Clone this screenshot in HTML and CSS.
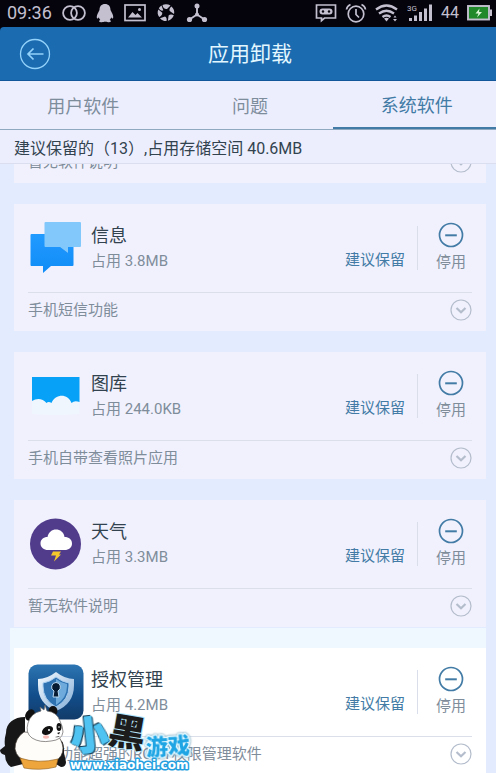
FILE: index.html
```html
<!DOCTYPE html>
<html lang="zh-CN">
<head>
<meta charset="utf-8">
<meta name="viewport" content="width=device-width, initial-scale=1">
<title>应用卸载</title>
<link rel="stylesheet" href="styles.css">
</head>
<body>
<svg class="defs" aria-hidden="true">
  <symbol id="minus" viewBox="0 0 26 26"><circle cx="13" cy="13" r="11.5" fill="none" stroke="currentColor" stroke-width="1.7"/><path d="M7.2 13.3h11.6" stroke="currentColor" stroke-width="2"/></symbol>
  <symbol id="chevron" viewBox="0 0 22 22"><circle cx="11" cy="11" r="10" fill="none" stroke="currentColor" stroke-width="1.2"/><path d="M6.5 9l4.5 4.2L15.5 9" fill="none" stroke="currentColor" stroke-width="2.2"/></symbol>
</svg>

<div class="status">
  <div class="status-group">
    <span class="clock">09:36</span>
    <svg width="24" height="18" viewBox="0 0 24 18" fill="none" stroke="currentColor" stroke-width="1.8"><circle cx="8" cy="9" r="6.9"/><circle cx="16" cy="9" r="6.9"/></svg>
    <svg width="18" height="20" viewBox="0 0 18 20" fill="currentColor"><path d="M9 1C5.500 1 3.500 3.300 3.500 7L1.500 11C.6 13.200.5 15.200 1.300 15.500c.5.100 1.100-.6 1.500-1.300.2 1 .8 2 1.500 2.700-1 .4-1.300 1-1.200 1.500.3 1.100 4.700 1 5.900.2 1.200.8 5.600.9 5.900-.2.1-.5-.2-1.100-1.200-1.500.7-.7 1.300-1.700 1.500-2.700.4.700 1 1.400 1.500 1.300.8-.3.700-2.300-.2-4.500L14.500 7C14.500 3.300 12.500 1 9 1z"/></svg>
    <svg width="22" height="18" viewBox="0 0 22 18"><rect x="1" y="1" width="20" height="15.500" fill="none" stroke="currentColor" stroke-width="1.7"/><path d="M4 13.500l4.500-5.500 3 3 2-2 4.500 4.500z" fill="currentColor"/><circle cx="15.500" cy="5.500" r="1.500" fill="currentColor"/></svg>
    <svg width="20" height="20" viewBox="0 0 20 20" fill="currentColor"><path d="M6.500 2C9 .8 12 1 14.500 2.500L11 6C9 6.500 6.800 4.800 6.500 2zM15.500 3.400c2.300 2 3.300 5 2.500 7.700l-4.300-3C13 6.500 13.700 4.600 15.500 3.400zM17.800 12.300c-1 2.700-3.200 4.700-5.900 5.400l.7-5.200c1.200-1.400 3.300-1.400 5.200-.2zM10.500 18c-2.500.2-5-.9-6.500-2.800L9 13.500c1.500.8 2 2.700 1.500 4.500zM3.200 14C1.500 11.800 1.200 9 2.300 6.400l4 3.400c.1 2-1.100 3.500-3.100 4.200zM2.800 5.300C3.500 4 4.400 3.100 5.500 2.500L7.300 7.200C6.300 8.200 4 7.500 2.800 5.300z"/></svg>
    <svg width="22" height="20" viewBox="0 0 22 20"><path d="M11 3v8.500M11 11.500l-7.500 5M11 11.500l7.500 5" stroke="currentColor" stroke-width="1.9"/><g fill="currentColor"><circle cx="11" cy="3" r="2.500"/><circle cx="11" cy="11.500" r="2"/><circle cx="3.500" cy="16.500" r="2.600"/><circle cx="18.500" cy="16.500" r="2.600"/></g></svg>
  </div>
  <div class="status-group status-right">
    <svg width="22" height="20" viewBox="0 0 22 20"><path d="M1.500 2h19v13h-11L6.500 17.700V15h-5z" fill="none" stroke="currentColor" stroke-width="1.7"/><rect x="4.500" y="5.500" width="13" height="6" rx="3" fill="currentColor"/><circle cx="8" cy="8.500" r="1.200" fill="#05040d"/><circle cx="14" cy="8.500" r="1.200" fill="#05040d"/></svg>
    <svg width="22" height="20" viewBox="0 0 22 20" fill="none" stroke="currentColor" stroke-width="1.7"><circle cx="11" cy="11" r="7.800"/><path d="M11 6v5.500l3 3M1.500 6.500Q2 3 5.500 1.500M20.500 6.500Q20 3 16.500 1.500"/></svg>
    <svg width="24" height="20" viewBox="0 0 24 20"><g fill="none" stroke="currentColor" stroke-width="2.300"><path d="M1 6.500Q11.500-1.500 22 6.500M4 10.500q7.500-5.500 15 0M7.500 14q4-3 8 0"/></g><path d="M9 15.500q2.500-1.500 5 0L11.500 18.500zM18 16h4l-2 2.500zM18.500 14.500h3l-1.500-2z" fill="currentColor"/></svg>
    <svg width="26" height="20" viewBox="0 0 26 20" fill="currentColor"><text class="network" x="0" y="8">3G</text><path d="M2 15h3v3H2zM7 12.500h3V18H7zM12 9h3v9h-3zM17 5.500h3V18h-3zM22 1.500h3V18h-3z"/></svg>
    <span class="level">44</span>
    <svg width="25" height="18" viewBox="0 0 25 18"><rect x="1" y="2" width="21" height="13.500" fill="#208a2b" stroke="currentColor" stroke-width="1.9"/><path d="M23 5.500h2v6.500h-2z" fill="currentColor"/><path d="M12.500 4.500L8.500 9.500h3L10 13.500l5-5.500h-3z" fill="#d9f5d5"/></svg>
  </div>
</div>

<header class="header">
  <button class="back" type="button" aria-label="返回"><svg width="32" height="32" viewBox="0 0 32 32" fill="none" stroke="currentColor"><circle cx="16" cy="16" r="14.500" stroke-width="1.300"/><path d="M24.500 16H9M14.500 10.500L9 16l5.500 5.500" stroke-width="1.700"/></svg></button>
  <h1>应用卸载</h1>
</header>

<nav class="tabs">
  <a href="#user">用户软件</a>
  <a href="#problem">问题</a>
  <a class="active" href="#system">系统软件</a>
</nav>
<p class="summary">建议保留的<span class="paren" lang="zh-TW">（</span>13<span class="paren" lang="zh-TW">）</span>,占用存储空间 40.6MB</p>

<main class="list">
  <section class="card card-tail">
    <div class="foot"><span>暂无软件说明</span><button type="button" aria-label="展开"><svg><use href="#chevron"/></svg></button></div>
  </section>

  <section class="card">
    <div class="app">
      <div class="icon"><svg width="54" height="52" viewBox="0 0 54 52"><defs><linearGradient id="blue" x2="0" y2="1"><stop stop-color="#229bff"/><stop offset="1" stop-color="#108cf7"/></linearGradient></defs><path d="M2.500 13q0-1 1-1h42v31q0 1-1 1H23l-8 7V44H3.500q-1 0-1-1z" fill="url(#blue)"/><path d="M40 24v7l-8-6z" fill="#087ce7"/><path d="M16.500 1q0-1 1-1H52q1 0 1 1v23q0 1-1 1H40v6l-8-6H17.500q-1 0-1-1z" fill="#83c8fb"/></svg></div>
      <div class="info"><h2>信息</h2><p>占用 3.8MB</p></div>
      <span class="advice">建议保留</span>
      <button class="stop" type="button"><svg><use href="#minus"/></svg>停用</button>
    </div>
    <div class="foot"><span>手机短信功能</span><button type="button" aria-label="展开"><svg><use href="#chevron"/></svg></button></div>
  </section>

  <section class="card">
    <div class="app">
      <div class="icon"><svg width="54" height="52" viewBox="0 0 54 52"><path d="M4 20h47.500v24q-24 2-47.500 0z" fill="#f0f6fe"/><path d="M4 7h47.500v25q-5-2-8 1c-4-10-16-9-20 0q-3-2-5 0c-4-5-10-5-14.500-2z" fill="#08a1f8"/></svg></div>
      <div class="info"><h2>图库</h2><p>占用 244.0KB</p></div>
      <span class="advice">建议保留</span>
      <button class="stop" type="button"><svg><use href="#minus"/></svg>停用</button>
    </div>
    <div class="foot"><span>手机自带查看照片应用</span><button type="button" aria-label="展开"><svg><use href="#chevron"/></svg></button></div>
  </section>

  <section class="card">
    <div class="app">
      <div class="icon"><svg width="54" height="52" viewBox="0 0 54 52"><circle cx="27.500" cy="26" r="25.500" fill="#513c8b"/><path d="M20 32c-4 0-7.500-2.500-7.500-6.500s3-6.500 7-6.500c1-5 4.500-7.500 8.500-7.500s8 2.500 8.500 7.500c4.500 0 7.500 2.500 7.500 6.500S41 32 36.500 32z" fill="#fff"/><path d="M25 33.500h8l-2 3h2l-7 7 2-6h-5z" fill="#f6c72d"/></svg></div>
      <div class="info"><h2>天气</h2><p>占用 3.3MB</p></div>
      <span class="advice">建议保留</span>
      <button class="stop" type="button"><svg><use href="#minus"/></svg>停用</button>
    </div>
    <div class="foot"><span>暂无软件说明</span><button type="button" aria-label="展开"><svg><use href="#chevron"/></svg></button></div>
  </section>

  <div class="highlight">
    <section class="card">
      <div class="app">
        <div class="icon"><svg width="56" height="56" viewBox="0 0 56 56"><defs><linearGradient id="lock" x2="0" y2="1"><stop stop-color="#2d76b3"/><stop offset=".55" stop-color="#124e8c"/><stop offset="1" stop-color="#123b69"/></linearGradient><linearGradient id="rim" x2="1" y2="1"><stop stop-color="#f5fbff"/><stop offset="1" stop-color="#84add7"/></linearGradient></defs><rect x=".5" y=".5" width="55" height="55" rx="9" fill="url(#lock)"/><path d="M28 8q9 7 18 7v6q0 19-18 26Q10 40 10 21v-6q9 0 18-7z" fill="url(#rim)"/><path d="M28 13q6 5 13 6v3q0 14-13 21Q15 36 15 22v-3q7-1 13-6z" fill="#2e72b2" stroke="#a7cdee"/><path d="M28 15q5 4 11 5v2q0 12-11 19z" fill="#6eaadb"/><path d="M28 18.500a4.500 4.500 0 0 1 2 8.500L31 33h-6l1-6a4.500 4.500 0 0 1 2-8.500z" fill="#071b32" stroke="#b9daf4"/></svg></div>
        <div class="info"><h2>授权管理</h2><p>占用 4.2MB</p></div>
        <span class="advice">建议保留</span>
        <button class="stop" type="button"><svg><use href="#minus"/></svg>停用</button>
      </div>
      <div class="foot"><span>一款功能超强的ROOT权限管理软件</span><button type="button" aria-label="展开"><svg><use href="#chevron"/></svg></button></div>
    </section>
  </div>
</main>

<svg class="watermark" width="200" height="80" viewBox="0 -10 200 80" role="img" aria-label="小黑游戏">
  <path d="M25 14C14 14 6 20 6 30Q4 37 5 43L0 47q0 4 5 5 0 8 6 12l12-3 2-28z" fill="#171717"/>
  <path d="M57 36q8 0 7 14l2 9q0 5-5 5l-7-4z" fill="#181818"/>
  <path d="M24 29Q15 35 15 46q2 10 12 12 14 3 28 0 8-4 8-13-1-9-7-14z" fill="#fffdfa" stroke="#47413a" stroke-width=".7"/>
  <path d="M20 55q18 6 38 1l-2 8q-16 4-32 1z" fill="#eea63c" stroke="#8b5a1b" stroke-width=".6"/>
  <ellipse cx="30" cy="12" rx="4.500" ry="6" transform="rotate(30 30 12)" fill="#111"/>
  <ellipse cx="53" cy="8" rx="4.500" ry="5" fill="#111"/>
  <path d="M28 20q3-10 13-12l-1-4 4 3 1-5 2 6q10 1 13 10 3 6 3 11-1 8-12 9-11 2-19-3-7-5-4-15z" fill="#fff" stroke="#63605e" stroke-width=".7"/>
  <ellipse cx="47.500" cy="27.500" rx="6" ry="4" transform="rotate(-30 47.500 27.500)" fill="#121212"/>
  <ellipse cx="59" cy="24" rx="2.500" ry="4" fill="#121212"/>
  <circle cx="49" cy="27" r="1" fill="#fff"/><circle cx="59" cy="24" r=".8" fill="#fff"/>
  <ellipse cx="46" cy="34" rx="3" ry="1.700" fill="#f8bbb5"/>
  <path d="M57 30l3-1-1 2.500zM55 34q3 1 5-1" fill="#151515"/>
  <g transform="rotate(-6 90 33)"><text class="mark-small" x="71" y="46">小</text></g>
  <g transform="rotate(10 128 29)"><text class="mark-black" x="109" y="43">黑</text></g>
  <g transform="rotate(-3 168 44)"><text class="mark-game" x="146" y="51">游戏</text></g>
  <text class="mark-url" x="70" y="66">www.xiaohei.com</text>
</svg>
</body>
</html>
```

FILE: styles.css
```css
* { box-sizing: border-box; }
body {
  margin: 0;
  height: 100vh;
  overflow: hidden;
  display: flex;
  flex-direction: column;
  position: relative;
  background: #e3ebfe;
  font-family: Roboto, "Noto Sans CJK SC", sans-serif;
  color: #32434f;
}
h1, h2, p { margin: 0; font-weight: 400; }
button { border: 0; padding: 0; background: none; font: inherit; color: inherit; cursor: pointer; }
svg { display: block; flex: none; }
.defs { position: absolute; width: 0; height: 0; }

.status {
  flex: none;
  height: 27px;
  padding: 0 4px 2px 7px;
  display: flex;
  align-items: center;
  justify-content: space-between;
  background: #05040d;
  color: #c4c0d0;
}
.status-group { display: flex; align-items: center; gap: 10px; }
.status-right { gap: 8px; }
.clock { font-size: 18px; }
.level { font-size: 16px; }
.network { font-size: 8px; }

.header {
  flex: none;
  height: 54px;
  padding: 0 15px 0 19px;
  display: grid;
  grid-template-columns: 32px 1fr 32px;
  align-items: center;
  background: #1b6bb0;
  border-bottom: 1px solid #125799;
  border-radius: 4px 0 0 0;
  box-shadow: -4px -4px 0 #05040d;
  color: #e2f7ff;
}
.back { color: #93d2fa; }
.header h1 { font-size: 21px; line-height: 30px; text-align: center; }

.tabs {
  flex: none;
  height: 49px;
  margin-right: -4px;
  display: grid;
  grid-template-columns: repeat(3, 1fr);
  background: #edeefd;
  border-bottom: 1px solid #8fa9c1;
}
.tabs a {
  display: flex;
  align-items: center;
  justify-content: center;
  font-size: 18px;
  color: #7d8d9c;
  text-decoration: none;
}
.tabs .active { color: #427ba5; border-bottom: 2px solid #427ba5; }
.summary {
  flex: none;
  height: 34px;
  padding: 0 14px;
  font-size: 16px;
  line-height: 34px;
  background: #edeefd;
  border-bottom: 1px solid #dadeee;
}
.paren { font-family: "Noto Sans CJK TC", sans-serif; }

.list {
  flex: 1;
  min-height: 0;
  overflow: hidden;
  padding: 0 10px 0 14px;
}
.card {
  margin-bottom: 21px;
  padding: 0 14px;
  background: #f1f1fd;
}
.card-tail { margin-top: -20px; }
.app {
  height: 88px;
  display: flex;
  align-items: center;
}
.icon {
  width: 63px;
  display: flex;
}
.info { flex: 1; }
.info h2 { font-size: 18px; line-height: 26px; }
.info p { font-size: 15px; line-height: 24px; color: #7f8d9b; }
.advice {
  align-self: flex-end;
  margin: 0 12px 20px 0;
  font-size: 15px;
  line-height: 24px;
  color: #427ba5;
}
.stop {
  height: 44px;
  padding-left: 18px;
  margin-right: 6px;
  border-left: 1px solid #dadeea;
  display: flex;
  flex-direction: column;
  align-items: center;
  justify-content: center;
  gap: 2px;
  font-size: 15px;
  line-height: 24px;
  color: #7f8d9b;
}
.stop svg { width: 26px; height: 26px; color: #427ba5; }
.foot {
  height: 39px;
  padding-bottom: 4px;
  display: flex;
  align-items: center;
  justify-content: space-between;
  border-top: 1px solid #dadfea;
  font-size: 15px;
  line-height: 22px;
  color: #7f8d9b;
}
.foot svg { width: 22px; height: 22px; color: #b4bdcc; }
.card-tail .foot { border-top: 0; }
.highlight {
  margin: -20px 0 0 -4px;
  padding: 20px 0 0 4px;
  background: #eff7ff;
}
.highlight .card { background: #fff; }

.watermark {
  position: absolute;
  left: 0;
  bottom: 0;
  font-family: "Noto Sans CJK SC", sans-serif;
  font-weight: 900;
}
.watermark text { paint-order: stroke; stroke-linejoin: round; }
.mark-small {
  font-size: 37px;
  fill: #4fc3f2;
  stroke: #4fc3f2;
  stroke-width: 2px;
  filter: drop-shadow(1px 1px 0 #173f58) drop-shadow(-1px -1px 0 #173f58) drop-shadow(0 0 1px #e9fbff);
}
.mark-black {
  font-size: 37px;
  fill: #1c1c1c;
  stroke: #b4e6fa;
  stroke-width: 2px;
}
.mark-game {
  font-size: 22px;
  fill: #1fa5e4;
  stroke: #e4f8ff;
  stroke-width: 3px;
  filter: drop-shadow(0 0 1px #4f8aa8);
}
.mark-url {
  font-family: "DejaVu Sans", sans-serif;
  font-size: 12px;
  font-weight: 700;
  fill: #fff;
  stroke: #269fdf;
  stroke-width: 3px;
}
```
